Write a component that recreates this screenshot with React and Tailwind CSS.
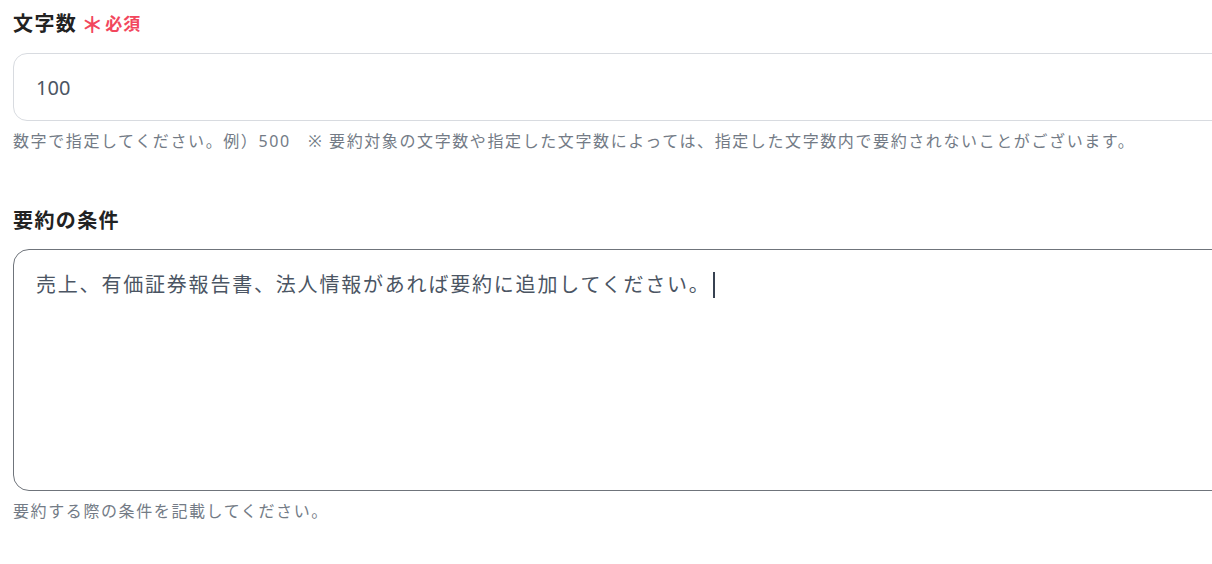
import React from 'react';

const font = { fontFamily: '"Noto Sans", "Noto Sans CJK JP", sans-serif' };

function Label({ children, required }) {
  return (
    <div className="flex items-center h-[28px] text-[20px] font-bold text-[#222222] tracking-[0.07em]">
      <span>{children}</span>
      {required && (
        <span className="flex items-center ml-[4px] text-[#f2475d]">
          <span className="text-[22px] font-bold leading-none tracking-normal">＊</span>
          <span className="text-[17px] ml-[2px] tracking-[0.06em]">必須</span>
        </span>
      )}
    </div>
  );
}

export default function App() {
  return (
    <div className="w-full overflow-hidden bg-white min-h-[564px]" style={font}>
      <div className="w-[1260px] pl-[13px] pt-[10px]">
        {/* 文字数 */}
        <Label required>文字数</Label>
        <div className="mt-[15px] h-[68px] rounded-[14px] border border-[#d8dbe0] flex items-center pl-[22px] pt-[2px] text-[20px] text-[#4b5563]">
          100
        </div>
        <p className="mt-[10px] h-[20px] leading-[20px] text-[16px] text-[#737b86] tracking-[0.1em] whitespace-nowrap">
          数字で指定してください。例）500　※ 要約対象の文字数や指定した文字数によっては、指定した文字数内で要約されないことがございます。
        </p>

        {/* 要約の条件 */}
        <div className="mt-[56px]">
          <Label>要約の条件</Label>
        </div>
        <div className="mt-[14px] h-[242px] rounded-[16px] border border-[#6f747b] pl-[22px] pt-[20px]">
          <div className="flex items-center h-[30px] text-[20px] text-[#4b5563] tracking-[0.09em] whitespace-nowrap">
            <span>売上、有価証券報告書、法人情報があれば要約に追加してください。</span>
            <span className="inline-block w-[2px] h-[26px] bg-[#374151] ml-[2px]" />
          </div>
        </div>
        <p className="mt-[10px] h-[20px] leading-[20px] text-[16px] text-[#737b86] tracking-[0.1em] whitespace-nowrap">
          要約する際の条件を記載してください。
        </p>
      </div>
    </div>
  );
}
